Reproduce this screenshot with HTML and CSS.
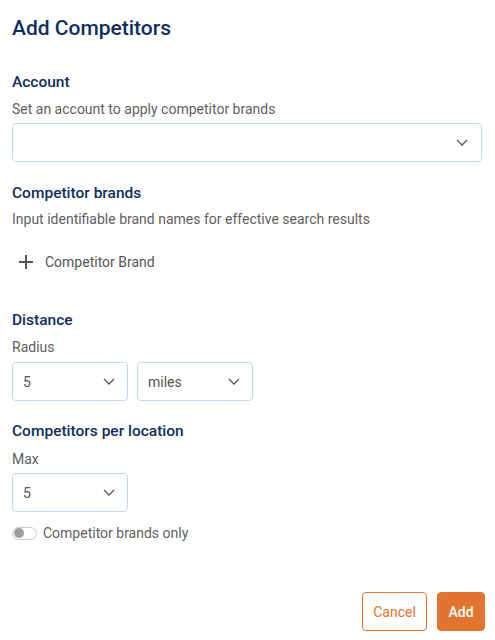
FILE: index.html
```html
<!DOCTYPE html>
<html lang="en">
<head>
    <meta charset="UTF-8">
    <meta name="viewport" content="width=device-width, initial-scale=1.0">
    <title>Add Competitors</title>
    <link rel="stylesheet" href="styles.css">
</head>
<body>
    <div class="dialog">
        <h1 class="dialog-title">Add Competitors</h1>

        <div class="section section-account">
            <h3 class="field-title">Account</h3>
            <p class="field-hint">Set an account to apply competitor brands</p>
            <div class="select select-wide">
                <span class="select-value"></span>
                <svg class="chevron" width="12" height="7" viewBox="0 0 12 7"><path d="M1 1l5 5 5-5" fill="none" stroke="#555" stroke-width="1.3"/></svg>
            </div>
        </div>

        <div class="section section-brands">
            <h3 class="field-title">Competitor brands</h3>
            <p class="field-hint">Input identifiable brand names for effective search results</p>
            <div class="add-brand">
                <svg class="plus" width="14" height="14" viewBox="0 0 14 14"><path d="M7 0v14M0 7h14" fill="none" stroke="#555" stroke-width="2"/></svg>
                <span>Competitor Brand</span>
            </div>
        </div>

        <div class="section section-distance">
            <h3 class="field-title">Distance</h3>
            <p class="field-label">Radius</p>
            <div class="select-row">
                <div class="select select-small">
                    <span class="select-value">5</span>
                    <svg class="chevron" width="12" height="7" viewBox="0 0 12 7"><path d="M1 1l5 5 5-5" fill="none" stroke="#555" stroke-width="1.3"/></svg>
                </div>
                <div class="select select-small">
                    <span class="select-value">miles</span>
                    <svg class="chevron" width="12" height="7" viewBox="0 0 12 7"><path d="M1 1l5 5 5-5" fill="none" stroke="#555" stroke-width="1.3"/></svg>
                </div>
            </div>
        </div>

        <div class="section section-max">
            <h3 class="field-title">Competitors per location</h3>
            <p class="field-label label-max">Max</p>
            <div class="select select-small">
                <span class="select-value">5</span>
                <svg class="chevron" width="12" height="7" viewBox="0 0 12 7"><path d="M1 1l5 5 5-5" fill="none" stroke="#555" stroke-width="1.3"/></svg>
            </div>
        </div>

        <label class="toggle-row">
            <span class="toggle"><span class="toggle-knob"></span></span>
            <span>Competitor brands only</span>
        </label>

        <div class="dialog-footer">
            <button class="btn btn-outline">Cancel</button>
            <button class="btn btn-primary">Add</button>
        </div>
    </div>
</body>
</html>
```

FILE: styles.css
```css
body {
    margin: 0;
    background-color: #fff;
    font-family: Roboto, "Liberation Sans", sans-serif;
    color: #5f5f5f;
}

.dialog {
    padding: 14px 13px 0 12px;
}

.dialog-title {
    margin: 0;
    font-size: 21px;
    line-height: 28px;
    font-weight: 500;
    color: #0f2e5b;
}

.section-account {
    margin-top: 30px;
}

.section-brands {
    margin-top: 21px;
}

.section-distance {
    margin-top: 38px;
}

.section-max {
    margin-top: 20px;
}

.field-title {
    margin: 0;
    font-size: 15.5px;
    line-height: 20px;
    font-weight: 500;
    color: #0f2e5b;
}

.field-hint,
.field-label {
    margin: 7px 0 0;
    font-size: 14px;
    line-height: 20px;
    color: #606060;
}

.section-brands .field-hint {
    margin-top: 6px;
}

.label-max {
    margin-top: 8px;
}

.select {
    box-sizing: border-box;
    height: 39px;
    margin-top: 4px;
    padding: 0 12px 0 10px;
    border: 1px solid #c6d7f6;
    border-radius: 4px;
    display: flex;
    align-items: center;
    justify-content: space-between;
    font-size: 14px;
    color: #555;
}

.select-wide {
    width: 100%;
    padding-right: 13px;
}

.select-small {
    width: 116px;
}

.select-row {
    display: flex;
    gap: 9px;
    margin-top: 5px;
}

.select-row .select {
    margin-top: 0;
}

.chevron {
    display: block;
}

.add-brand {
    margin-top: 23px;
    padding-left: 7px;
    display: flex;
    align-items: center;
    gap: 12px;
    font-size: 14px;
    line-height: 20px;
    color: #555;
}

.plus {
    display: block;
}

.toggle-row {
    margin-top: 11px;
    display: flex;
    align-items: center;
    gap: 6px;
    font-size: 14px;
    line-height: 20px;
    color: #5f5f5f;
}

.toggle {
    box-sizing: border-box;
    width: 25px;
    height: 13px;
    border: 1px solid #c8c8c8;
    border-radius: 7px;
    background-color: #fff;
    display: flex;
    align-items: center;
    padding-left: 1px;
}

.toggle-knob {
    width: 10px;
    height: 10px;
    border-radius: 50%;
    background-color: #9e9e9e;
}

.dialog-footer {
    margin-top: 49px;
    margin-right: -3px;
    display: flex;
    justify-content: flex-end;
    gap: 10px;
}

.btn {
    box-sizing: border-box;
    height: 39px;
    border-radius: 4px;
    font-family: Roboto, "Liberation Sans", sans-serif;
    font-size: 14px;
    cursor: pointer;
}

.btn-outline {
    width: 65px;
    border: 1px solid #e2742f;
    background-color: #fff;
    color: #e2742f;
}

.btn-primary {
    width: 48px;
    border: 1px solid #e2742f;
    background-color: #e2742f;
    color: #fff;
    font-weight: 500;
}
```
